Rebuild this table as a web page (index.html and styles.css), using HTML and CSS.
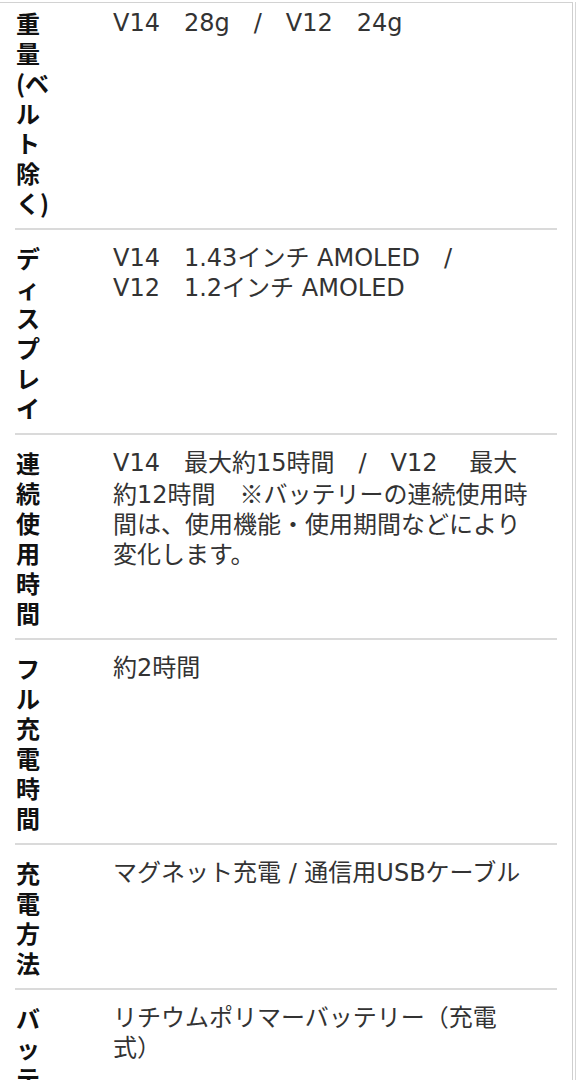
FILE: index.html
```html
<!DOCTYPE html>
<html lang="ja">
<head>
<meta charset="utf-8">
<title>仕様</title>
<link rel="stylesheet" href="styles.css">
</head>
<body>
<div class="frame">
  <div class="page">
    <div class="spec">
      <div class="row first">
        <div class="label">重量(ベルト除く)</div>
        <div class="value">V14　28g　/　V12　24g</div>
      </div>
      <div class="row">
        <div class="label">ディスプレイ</div>
        <div class="value">V14　1.43インチ AMOLED　/<br>V12　1.2インチ AMOLED</div>
      </div>
      <div class="row">
        <div class="label">連続使用時間</div>
        <div class="value">V14　最大約15時間　/　V12　 最大<br>約12時間　<span class="cjk">※</span>バッテリーの連続使用時<br>間は、使用機能・使用期間などにより<br>変化します。</div>
      </div>
      <div class="row">
        <div class="label">フル充電時間</div>
        <div class="value">約2時間</div>
      </div>
      <div class="row">
        <div class="label">充電方法</div>
        <div class="value">マグネット充電 / 通信用USBケーブル</div>
      </div>
      <div class="row">
        <div class="label">バッテリー</div>
        <div class="value">リチウムポリマーバッテリー（充電<br>式）</div>
      </div>
    </div>
  </div>
</div>
</body>
</html>
```

FILE: styles.css
```css
html, body {
  margin: 0;
  padding: 0;
  background: #ffffff;
}

body {
  font-family: "DejaVu Sans", "Noto Sans CJK JP", sans-serif;
  color: #333333;
}

.frame {
  width: 573px;
  padding-right: 2px;
  border-right: 1px solid #d6d6d6;
  min-height: 1200px;
}

.page {
  margin-top: 2px;
  border-top: 1px solid #d2d2d2;
  border-right: 1px solid #cfcfcf;
  min-height: 1200px;
}

.spec {
  margin-left: 15px;
  width: 542px;
}

.row {
  display: grid;
  grid-template-columns: 97px 1fr;
  padding: 13px 30px 10px 1px;
  border-bottom: 2px solid #dadada;
}

.row.first {
  padding-top: 5px;
}

.label {
  width: 36px;
  font-family: "Noto Sans CJK JP", sans-serif;
  font-weight: 700;
  font-size: 24px;
  line-height: 30px;
  color: #111111;
}

.value {
  font-size: 24px;
  line-height: 30px;
  color: #333333;
  white-space: nowrap;
}

.cjk {
  font-family: "Noto Sans CJK JP", sans-serif;
}
```
